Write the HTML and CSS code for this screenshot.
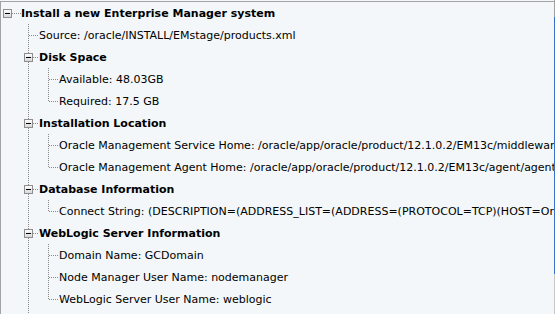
FILE: index.html
```html
<!DOCTYPE html>
<html lang="en">
<head>
    <meta charset="UTF-8">
    <meta name="viewport" content="width=device-width, initial-scale=1.0">
    <title>Review</title>
    <link rel="stylesheet" href="styles.css">
</head>
<body>
    <div class="panel">
        <ul class="tree">
            <li class="node root">
                <div class="row">
                    <span class="toggle"><svg width="9" height="9" viewBox="0 0 9 9"><defs><linearGradient id="tg" x1="0" y1="0" x2="0" y2="1"><stop offset="0" stop-color="#ffffff"/><stop offset="1" stop-color="#d6d6d6"/></linearGradient></defs><rect x="0.5" y="0.5" width="8" height="8" fill="url(#tg)" stroke="#8e8e8e"/><path d="M2 4.5h5" stroke="#000" stroke-width="1"/></svg></span>
                    <span class="label strong">Install a new Enterprise Manager system</span>
                </div>
                <ul class="children top">
                    <li class="leaf"><div class="row">Source: /oracle/INSTALL/EMstage/products.xml</div></li>
                    <li class="node">
                        <div class="row">
                            <span class="toggle"><svg width="9" height="9" viewBox="0 0 9 9"><rect x="0.5" y="0.5" width="8" height="8" fill="url(#tg)" stroke="#8e8e8e"/><path d="M2 4.5h5" stroke="#000" stroke-width="1"/></svg></span>
                            <span class="label strong">Disk Space</span>
                        </div>
                        <ul class="children">
                            <li class="leaf"><div class="row">Available: 48.03GB</div></li>
                            <li class="leaf last"><div class="row">Required: 17.5 GB</div></li>
                        </ul>
                    </li>
                    <li class="node">
                        <div class="row">
                            <span class="toggle"><svg width="9" height="9" viewBox="0 0 9 9"><rect x="0.5" y="0.5" width="8" height="8" fill="url(#tg)" stroke="#8e8e8e"/><path d="M2 4.5h5" stroke="#000" stroke-width="1"/></svg></span>
                            <span class="label strong">Installation Location</span>
                        </div>
                        <ul class="children">
                            <li class="leaf"><div class="row">Oracle Management Service Home: /oracle/app/oracle/product/12.1.0.2/EM13c/middleware</div></li>
                            <li class="leaf last"><div class="row">Oracle Management Agent Home: /oracle/app/oracle/product/12.1.0.2/EM13c/agent/agent_13.1.0.0.0</div></li>
                        </ul>
                    </li>
                    <li class="node">
                        <div class="row">
                            <span class="toggle"><svg width="9" height="9" viewBox="0 0 9 9"><rect x="0.5" y="0.5" width="8" height="8" fill="url(#tg)" stroke="#8e8e8e"/><path d="M2 4.5h5" stroke="#000" stroke-width="1"/></svg></span>
                            <span class="label strong">Database Information</span>
                        </div>
                        <ul class="children">
                            <li class="leaf last"><div class="row">Connect String: (DESCRIPTION=(ADDRESS_LIST=(ADDRESS=(PROTOCOL=TCP)(HOST=OracleDB)(PORT=1521)))</div></li>
                        </ul>
                    </li>
                    <li class="node more">
                        <div class="row">
                            <span class="toggle"><svg width="9" height="9" viewBox="0 0 9 9"><rect x="0.5" y="0.5" width="8" height="8" fill="url(#tg)" stroke="#8e8e8e"/><path d="M2 4.5h5" stroke="#000" stroke-width="1"/></svg></span>
                            <span class="label strong">WebLogic Server Information</span>
                        </div>
                        <ul class="children">
                            <li class="leaf"><div class="row">Domain Name: GCDomain</div></li>
                            <li class="leaf"><div class="row">Node Manager User Name: nodemanager</div></li>
                            <li class="leaf last"><div class="row">WebLogic Server User Name: weblogic</div></li>
                        </ul>
                    </li>
                </ul>
            </li>
        </ul>
    </div>
    <div class="edge"></div>
</body>
</html>
```

FILE: styles.css
```css
body {
    margin: 0;
    height: 314px;
    overflow: hidden;
    display: flex;
    font-family: "DejaVu Sans", sans-serif;
    font-size: 11px;
    color: #000;
    background-color: #f3f7f9;
}

.panel {
    flex: 1;
    margin-top: 1px;
    border-top: 1px solid #a3a3a3;
    border-left: 1px solid #a3a3a3;
    background-color: #f3f7f9;
    overflow: hidden;
}

.edge {
    width: 1px;
    background: linear-gradient(#a3a3a3 0 17px, #3b6fd0 17px 274px, #c8c8c8 274px);
}

.tree,
.children {
    list-style: none;
    margin: 0;
}

.tree {
    padding: 0 0 0 6px;
}

.children {
    padding-left: 20px;
}

.children.top {
    padding-left: 21px;
}

li {
    position: relative;
}

.row {
    height: 22px;
    display: flex;
    align-items: center;
    padding-left: 11px;
    white-space: nowrap;
}

.root > .row {
    padding-left: 14px;
}

.strong {
    font-weight: bold;
}

.toggle {
    position: absolute;
    left: -4px;
    top: 7px;
    width: 9px;
    height: 9px;
    z-index: 1;
}

.toggle svg {
    display: block;
}

/* tree connector lines */
.children > li::before {
    content: "";
    position: absolute;
    left: 0;
    top: 0;
    bottom: 0;
    width: 1px;
    background: linear-gradient(#8a8a8a 50%, transparent 50%) 0 0 / 1px 2px repeat-y;
}

.children > li.last::before {
    bottom: auto;
    height: 12px;
}

.children > li.more::before {
    bottom: -12px;
}

.children > li::after,
.root::after {
    content: "";
    position: absolute;
    left: 1px;
    top: 11px;
    width: 10px;
    height: 1px;
    background: linear-gradient(to right, #8a8a8a 50%, transparent 50%) 0 0 / 2px 1px repeat-x;
}

.root::after {
    left: 5px;
    width: 9px;
}
```
